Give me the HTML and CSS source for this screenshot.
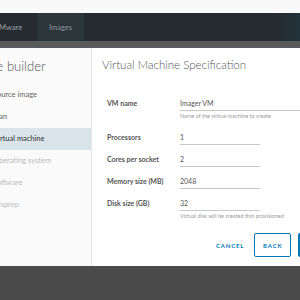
FILE: index.html
```html
<!DOCTYPE html>
<html lang="en">
<head>
<meta charset="UTF-8" />
<title>Image builder</title>
<link rel="stylesheet" href="styles.css">
</head>
<body>
<div class="topstrip"></div>
<header class="appbar">
  <span class="brand">VMware</span>
  <span class="tab">Images</span>
  <span class="spacer"></span>
</header>
<div class="band"></div>

<div class="modal">
  <aside class="sidebar">
    <div class="side-title">Image builder</div>
    <ul class="steps">
      <li>Source image</li>
      <li>Plan</li>
      <li class="active">Virtual machine</li>
      <li class="disabled">Operating system</li>
      <li class="disabled">Software</li>
      <li class="disabled">Sysprep</li>
    </ul>
  </aside>

  <section class="content">
    <h2>Virtual Machine Specification</h2>

    <div class="form">
      <div class="row">
        <label>VM name</label>
        <div class="field wide">
          <div class="input">Imager VM</div>
          <div class="help">Name of the virtual machine to create</div>
        </div>
      </div>
      <div class="row">
        <label>Processors</label>
        <div class="field"><div class="input">1</div></div>
      </div>
      <div class="row">
        <label>Cores per socket</label>
        <div class="field"><div class="input">2</div></div>
      </div>
      <div class="row">
        <label>Memory size (MB)</label>
        <div class="field"><div class="input">2048</div></div>
      </div>
      <div class="row">
        <label>Disk size (GB)</label>
        <div class="field">
          <div class="input">32</div>
          <div class="help">Virtual disk will be created thin provisioned</div>
        </div>
      </div>
    </div>

    <div class="actions">
      <button class="btn link">CANCEL</button>
      <button class="btn outline">BACK</button>
      <button class="btn primary">NEXT</button>
    </div>
  </section>
</div>
</body>
</html>
```

FILE: styles.css
```css
body {
  margin: 0;
  background: #4b4b4b;
  font-family: Lato, "Open Sans", sans-serif;
  color: #333;
  overflow: hidden;
}
.topstrip {
  height: 13px;
  background: #f9f9f9;
}
.appbar {
  height: 28px;
  background: #262b31;
  display: flex;
  align-items: center;
  margin-left: -6px;
}
.brand {
  color: #9aa0a6;
  font-size: 7.5px;
  width: 43px;
  flex: none;
}
.tab {
  height: 100%;
  display: flex;
  align-items: center;
  padding: 0 12px;
  background: #2c353a;
  color: #8c969c;
  font-size: 7.5px;
}
.spacer {
  flex: 1;
  height: 100%;
  background: linear-gradient(to right, #262b31 88%, #22323a);
}
.band {
  height: 7px;
  background: #5a5a5a;
}

.modal {
  display: flex;
  height: 218px;
  margin-left: -40px;
  background: #fff;
}
.sidebar {
  width: 131px;
  flex: none;
  background: #fafafa;
  border-right: 1px solid #e6e6e6;
}
.side-title {
  padding: 10px 0 0 10px;
  height: 26px;
  font-size: 13px;
  font-weight: 300;
  color: #555;
}
.steps {
  list-style: none;
  margin: 0;
  padding: 0;
}
.steps li {
  height: 22px;
  line-height: 22px;
  padding-left: 33px;
  font-size: 7.5px;
  color: #666;
}
.steps li.active {
  background: #d8e3ea;
  color: #333;
}
.steps li.disabled {
  color: #bbb;
}

.content {
  flex: 1;
  padding: 0 0 0 12px;
}
.content h2 {
  margin: 0 0 0 -2px;
  padding-top: 10px;
  height: 30px;
  font-size: 11.5px;
  font-weight: 300;
  color: #565656;
}
.form {
  padding-left: 3px;
  padding-top: 8px;
}
.row {
  display: flex;
  min-height: 22px;
}
.row:first-child {
  min-height: 34px;
}
.row label {
  width: 73px;
  flex: none;
  font-size: 7px;
  font-weight: 700;
  color: #555;
  line-height: 14px;
}
.field {
  width: 80px;
}
.field.wide {
  width: auto;
  flex: 1;
}
.input {
  height: 14px;
  line-height: 14px;
  font-size: 7px;
  color: #555;
  border-bottom: 1px solid #c8c8c8;
}
.help {
  font-size: 5.5px;
  color: #999;
  padding-top: 2px;
  white-space: nowrap;
}
.actions {
  display: flex;
  align-items: center;
  padding: 14px 0 0 112px;
}
.btn {
  height: 24px;
  border-radius: 2px;
  font-family: Lato, sans-serif;
  font-size: 6px;
  font-weight: 700;
  letter-spacing: 0.8px;
  padding: 0 8px;
  flex: none;
}
.btn.link {
  border: none;
  background: none;
  color: #0079b8;
  padding: 0;
  margin-right: 10px;
}
.btn.outline {
  border: 1px solid #0079b8;
  background: #fff;
  color: #0079b8;
  margin-right: 7px;
}
.btn.primary {
  border: 1px solid #0079b8;
  background: #0079b8;
  color: #fff;
}
```
